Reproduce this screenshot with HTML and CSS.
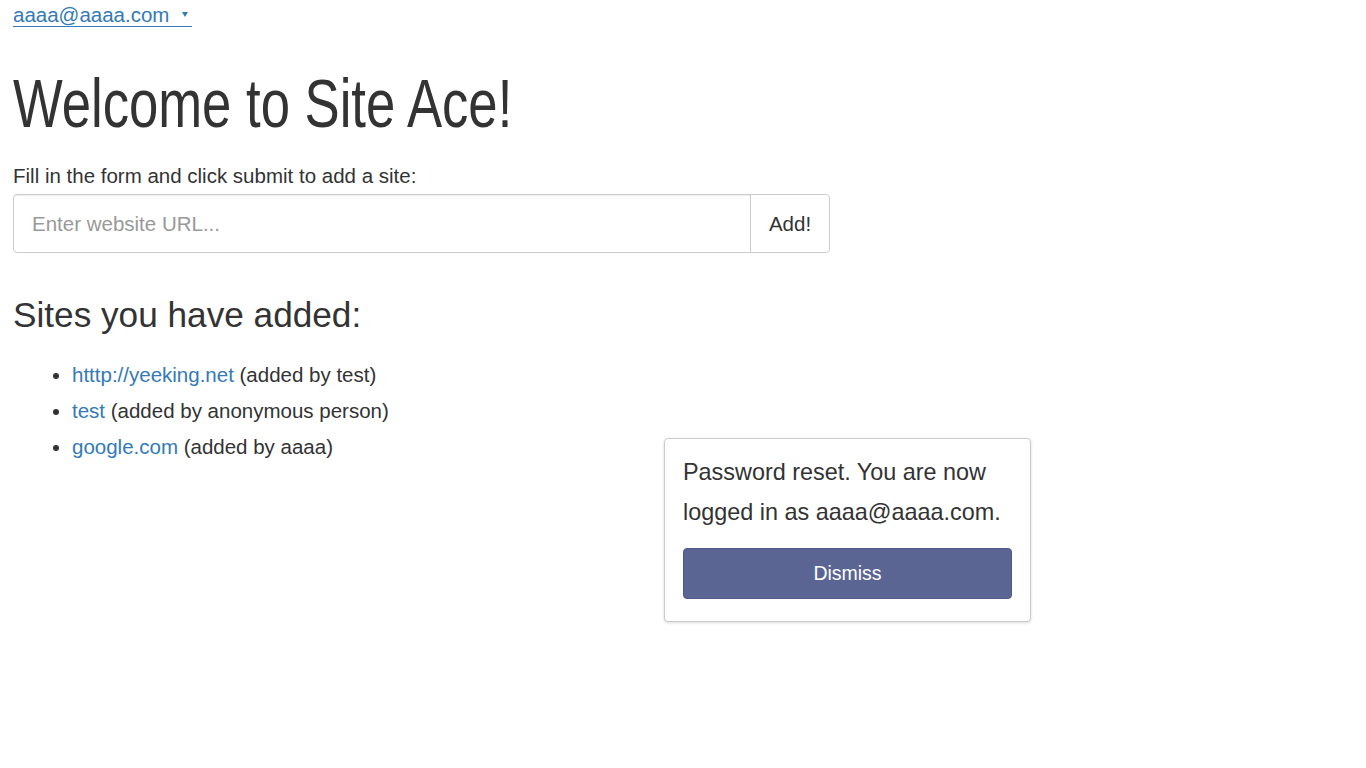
FILE: index.html
```html
<!DOCTYPE html>
<html lang="en">
<head>
<meta charset="utf-8">
<title>Site Ace</title>
<link rel="stylesheet" href="styles.css">
</head>
<body>
<div class="page">
  <div class="login"><a href="#" class="login-link">aaaa@aaaa.com<span class="caret"></span></a></div>
  <h1 class="title"><span class="title-text">Welcome to Site Ace!</span></h1>
  <p class="hint">Fill in the form and click submit to add a site:</p>
  <form class="input-group">
    <input class="url-input" type="text" placeholder="Enter website URL...">
    <button class="add-btn" type="button">Add!</button>
  </form>
  <h2 class="subtitle">Sites you have added:</h2>
  <ul class="sites">
    <li><a href="#">htttp://yeeking.net</a> (added by test)</li>
    <li><a href="#">test</a> (added by anonymous person)</li>
    <li><a href="#">google.com</a> (added by aaaa)</li>
  </ul>
</div>
<div class="toast">
  <p class="toast-text">Password reset. You are now logged in as aaaa@aaaa.com.</p>
  <button class="dismiss" type="button">Dismiss</button>
</div>
</body>
</html>
```

FILE: styles.css
```css
html, body {
  margin: 0;
  padding: 0;
  background: #fff;
}
body {
  font-family: "Liberation Sans", Arial, sans-serif;
  font-size: 20.5px;
  color: #333;
}
a {
  color: #337ab7;
  text-decoration: none;
}
.page {
  padding: 0 13px;
}
.login {
  height: 30px;
  padding-top: 3px;
  box-sizing: border-box;
}
.login-link {
  display: inline-block;
  line-height: 22px;
  border-bottom: 1px solid #337ab7;
  color: #337ab7;
  padding-right: 4px;
}
.caret {
  display: inline-block;
  width: 0;
  height: 0;
  margin-left: 13px;
  vertical-align: middle;
  border-top: 5px solid #337ab7;
  border-left: 3px solid transparent;
  border-right: 3px solid transparent;
  position: relative;
  top: -2px;
}
.title {
  margin: 37px 0 0;
  font-weight: normal;
  font-size: 68px;
  line-height: 72px;
  color: #333;
  white-space: nowrap;
}
.title-text {
  display: inline-block;
  transform: scaleX(0.774);
  transform-origin: left center;
}
.hint {
  margin: 25px 0 0;
  line-height: 24px;
}
.input-group {
  display: flex;
  width: 817px;
  height: 59px;
  margin: 6px 0 0;
  box-sizing: border-box;
  border: 1px solid #ccc;
  border-radius: 4px;
  box-shadow: inset 0 1px 1px rgba(0,0,0,.075);
}
.url-input {
  flex: 1;
  min-width: 0;
  border: 0;
  outline: none;
  padding: 0 18px;
  font: inherit;
  color: #555;
  background: transparent;
}
.url-input::placeholder {
  color: #999;
}
.add-btn {
  width: 79px;
  border: 0;
  border-left: 1px solid #ccc;
  background: #fff;
  font: inherit;
  color: #333;
  padding: 0;
  border-radius: 0 4px 4px 0;
}
.subtitle {
  margin: 42px 0 0;
  font-weight: normal;
  font-size: 35.2px;
  line-height: 40px;
  color: #333;
}
.sites {
  margin: 22px 0 0;
  padding: 0 0 0 59px;
  line-height: 36px;
}
.toast {
  position: absolute;
  left: 664px;
  top: 438px;
  width: 367px;
  height: 184px;
  box-sizing: border-box;
  border: 1px solid #ccc;
  border-radius: 4px;
  box-shadow: 0 1px 3px rgba(0,0,0,.15);
  background: #fff;
  padding: 13px 18px 0;
}
.toast-text {
  margin: 0;
  font-size: 23.4px;
  line-height: 40px;
  color: #333;
}
.dismiss {
  display: block;
  width: 100%;
  height: 51px;
  margin-top: 16px;
  border: 1px solid #4f5985;
  border-radius: 4px;
  background: #5a6593;
  color: #fff;
  font: inherit;
  font-size: 19.5px;
}
```
